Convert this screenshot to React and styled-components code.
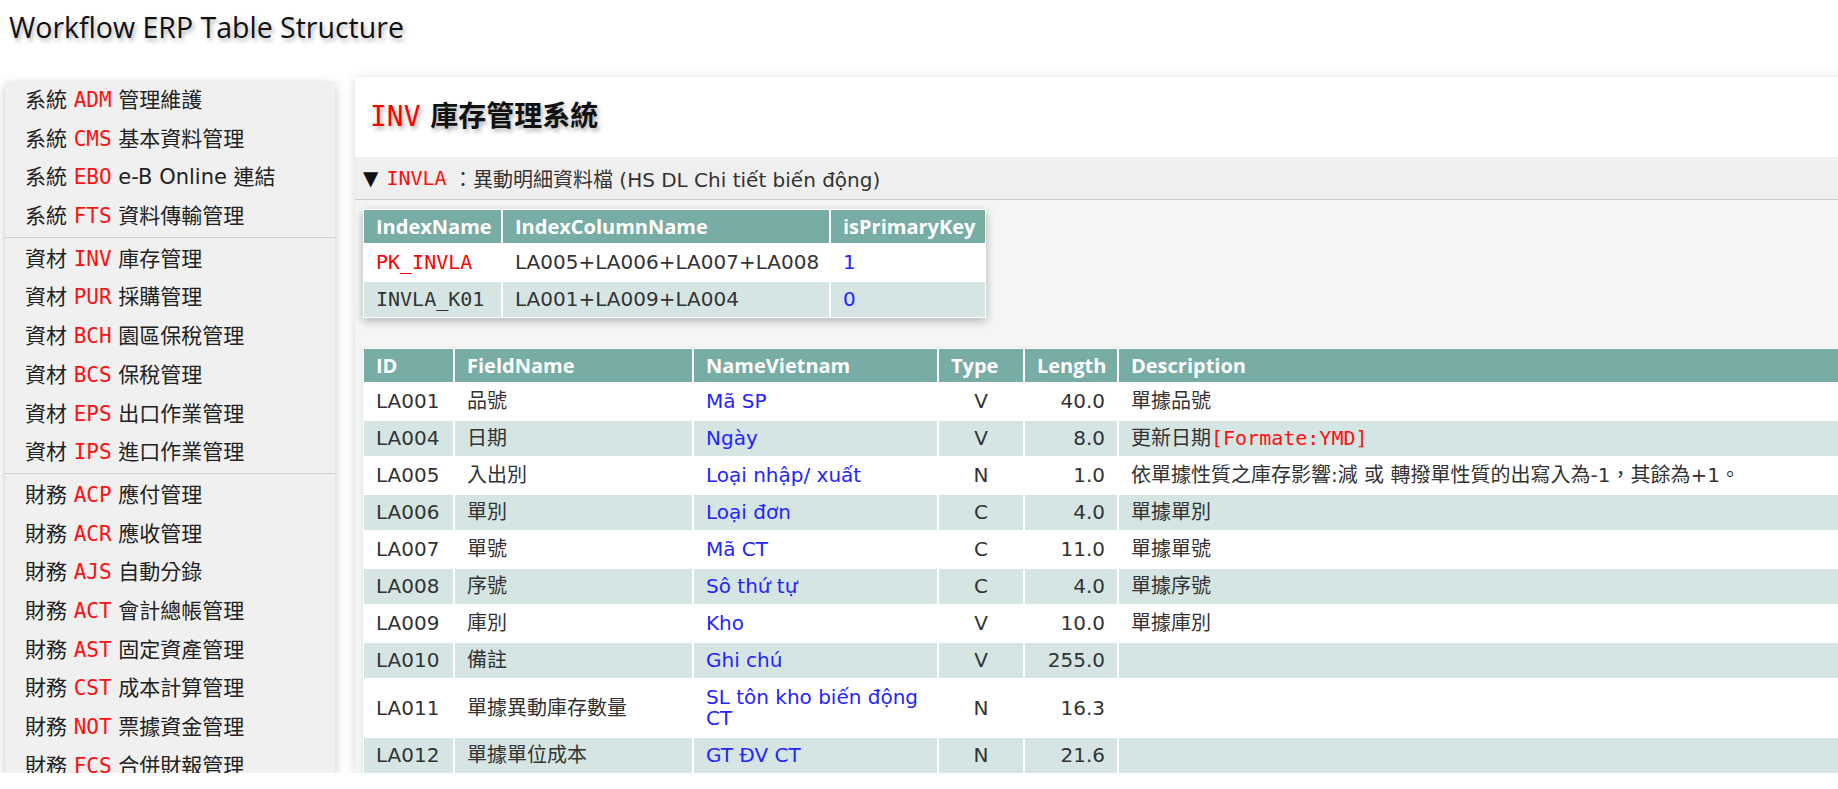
import React from "react";
import styled, { createGlobalStyle } from "styled-components";

const GlobalStyle = createGlobalStyle`
  html, body {
    margin: 0;
    padding: 0;
    overflow: hidden;
    background: #fff;
  }
  body {
    font-family: "DejaVu Sans", "Noto Sans CJK TC", sans-serif;
    color: #222;
  }
`;

const Page = styled.div`
  padding: 8px 0 0 5px;
  width: max-content;
`;

const SiteTitle = styled.h1`
  margin: 0;
  padding-left: 4px;
  font-family: "Open Sans", "Noto Sans CJK TC", sans-serif;
  font-weight: 400;
  font-size: 28.5px;
  line-height: 38px;
  color: #111;
  text-shadow: 2px 3px 4px rgba(0, 0, 0, 0.3);
`;

const Body = styled.div`
  display: flex;
  align-items: flex-start;
  gap: 20px;
  margin-top: 31px;
`;

const SideBar = styled.nav`
  width: 330px;
  height: 692px;
  margin-top: 4px;
  overflow: hidden;
  background: #f0f0f0;
  box-shadow: 0 4px 10px rgba(0, 0, 0, 0.22);
`;

const Group = styled.div`
  padding: 2px 0 1px;

  &:first-child {
    padding-top: 0;
  }
  & + & {
    border-top: 1px solid #cfcfcf;
  }
`;

const MenuItem = styled.div`
  height: 38.7px;
  line-height: 38.7px;
  padding-left: 20px;
  font-size: 21px;
  white-space: nowrap;
  color: #222;
`;

const Code = styled.span`
  font-family: "DejaVu Sans Mono", "Noto Sans CJK TC", monospace;
  color: #ff1010;
  font-weight: 400;
`;

const MainArea = styled.main`
  width: 1571px;
  height: 696px;
  overflow: hidden;
  background: #fff;
  box-shadow: 0 2px 10px rgba(0, 0, 0, 0.16);
`;

const ModuleTitle = styled.h2`
  margin: 0;
  height: 80px;
  display: flex;
  align-items: center;
  padding-left: 15px;
  font-size: 28px;
  line-height: 38px;
  font-weight: 700;
  color: #111;
  text-shadow: 2px 3px 4px rgba(0, 0, 0, 0.3);
  white-space: pre;

  ${Code} {
    color: #ff0000;
  }
`;

const Summary = styled.div`
  height: 42px;
  display: flex;
  align-items: center;
  padding-left: 8px;
  background: #efefef;
  border-bottom: 1px solid #cdcdcd;
  font-size: 20px;
  color: #333;
  white-space: pre;
`;

const Arrow = styled.span`
  color: #111;
  margin-right: 8px;
`;

const Details = styled.div`
  background: #f4f5f5;
  padding: 9px 8px 8px;
  display: flex;
  flex-direction: column;
  align-items: flex-start;
  gap: 30px;
`;

const Table = styled.table`
  border-collapse: separate;
  border-spacing: 0;
  table-layout: fixed;
  width: ${({ $width }) => $width}px;
  background: #fff;
  box-shadow: ${({ $shadow }) =>
    $shadow ? "0 3px 9px rgba(0, 0, 0, 0.28)" : "0 1px 4px rgba(0, 0, 0, 0.1)"};
`;

const Th = styled.th`
  box-sizing: border-box;
  width: ${({ $w }) => ($w ? `${$w}px` : "auto")};
  padding: 4px 12px;
  border: 1px solid #fff;
  background: #77ada5;
  color: #fff;
  font-family: "Open Sans", sans-serif;
  font-weight: 700;
  font-size: 20px;
  line-height: 25px;
  text-align: left;
  white-space: nowrap;
`;

const Row = styled.tr`
  background: ${({ $alt }) => ($alt ? "#d5e5e3" : "#fff")};
`;

const Td = styled.td`
  box-sizing: border-box;
  padding: 7px 12px;
  border: 1px solid #fff;
  font-size: 20px;
  line-height: 21px;
  vertical-align: middle;
  text-align: ${({ $align }) => $align || "left"};
  font-family: ${({ $mono }) =>
    $mono
      ? `"DejaVu Sans Mono", "Noto Sans CJK TC", monospace`
      : `"DejaVu Sans", "Noto Sans CJK TC", sans-serif`};
  color: ${({ $tone }) =>
    $tone === "red" ? "#ff0000" : $tone === "blue" ? "#2424ff" : "#333"};
  white-space: ${({ $wrap }) => ($wrap ? "normal" : "nowrap")};
`;

const menuGroups = [
  [
    ["系統", "ADM", "管理維護"],
    ["系統", "CMS", "基本資料管理"],
    ["系統", "EBO", "e-B Online 連結"],
    ["系統", "FTS", "資料傳輸管理"],
  ],
  [
    ["資材", "INV", "庫存管理"],
    ["資材", "PUR", "採購管理"],
    ["資材", "BCH", "園區保稅管理"],
    ["資材", "BCS", "保稅管理"],
    ["資材", "EPS", "出口作業管理"],
    ["資材", "IPS", "進口作業管理"],
  ],
  [
    ["財務", "ACP", "應付管理"],
    ["財務", "ACR", "應收管理"],
    ["財務", "AJS", "自動分錄"],
    ["財務", "ACT", "會計總帳管理"],
    ["財務", "AST", "固定資產管理"],
    ["財務", "CST", "成本計算管理"],
    ["財務", "NOT", "票據資金管理"],
    ["財務", "FCS", "合併財報管理"],
  ],
];

const indexes = [
  { name: "PK_INVLA", cols: "LA005+LA006+LA007+LA008", pk: "1", primary: true },
  { name: "INVLA_K01", cols: "LA001+LA009+LA004", pk: "0" },
];

const fields = [
  ["LA001", "品號", "Mã SP", "V", "40.0", "單據品號"],
  ["LA004", "日期", "Ngày", "V", "8.0", "更新日期", "[Formate:YMD]"],
  ["LA005", "入出別", "Loại nhập/ xuất", "N", "1.0", "依單據性質之庫存影響:減 或 轉撥單性質的出寫入為-1，其餘為+1。"],
  ["LA006", "單別", "Loại đơn", "C", "4.0", "單據單別"],
  ["LA007", "單號", "Mã CT", "C", "11.0", "單據單號"],
  ["LA008", "序號", "Sô thứ tự", "C", "4.0", "單據序號"],
  ["LA009", "庫別", "Kho", "V", "10.0", "單據庫別"],
  ["LA010", "備註", "Ghi chú", "V", "255.0", ""],
  ["LA011", "單據異動庫存數量", "SL tôn kho biến động CT", "N", "16.3", ""],
  ["LA012", "單據單位成本", "GT ĐV CT", "N", "21.6", ""],
];

const App = () => {
  return (
    <Page>
      <GlobalStyle />
      <SiteTitle>Workflow ERP Table Structure</SiteTitle>
      <Body>
        <SideBar>
          {menuGroups.map((group, gi) => (
            <Group key={gi}>
              {group.map(([kind, code, name]) => (
                <MenuItem key={code}>
                  {kind} <Code>{code}</Code> {name}
                </MenuItem>
              ))}
            </Group>
          ))}
        </SideBar>

        <MainArea>
          <ModuleTitle>
            <Code>INV</Code> 庫存管理系統
          </ModuleTitle>
          <Summary>
            <Arrow>▼</Arrow>
            <Code>INVLA</Code> ：異動明細資料檔 (HS DL Chi tiết biến động)
          </Summary>

          <Details>
            <Table $width={623} $shadow>
              <thead>
                <tr>
                  <Th $w={139}>IndexName</Th>
                  <Th $w={328}>IndexColumnName</Th>
                  <Th $w={156}>isPrimaryKey</Th>
                </tr>
              </thead>
              <tbody>
                {indexes.map((ix, i) => (
                  <Row key={ix.name} $alt={i % 2 === 1}>
                    <Td $mono $tone={ix.primary ? "red" : undefined}>
                      {ix.name}
                    </Td>
                    <Td>{ix.cols}</Td>
                    <Td $tone="blue">{ix.pk}</Td>
                  </Row>
                ))}
              </tbody>
            </Table>

            <Table $width={1555}>
              <thead>
                <tr>
                  <Th $w={91}>ID</Th>
                  <Th $w={239}>FieldName</Th>
                  <Th $w={245}>NameVietnam</Th>
                  <Th $w={86}>Type</Th>
                  <Th $w={94}>Length</Th>
                  <Th>Description</Th>
                </tr>
              </thead>
              <tbody>
                {fields.map(([id, name, vn, type, len, desc, fmt], i) => (
                  <Row key={id} $alt={i % 2 === 1}>
                    <Td>{id}</Td>
                    <Td>{name}</Td>
                    <Td $tone="blue" $wrap>
                      {vn}
                    </Td>
                    <Td $align="center">{type}</Td>
                    <Td $align="right">{len}</Td>
                    <Td>
                      {desc}
                      {fmt && <Code>{fmt}</Code>}
                    </Td>
                  </Row>
                ))}
              </tbody>
            </Table>
          </Details>
        </MainArea>
      </Body>
    </Page>
  );
};

export default App;
